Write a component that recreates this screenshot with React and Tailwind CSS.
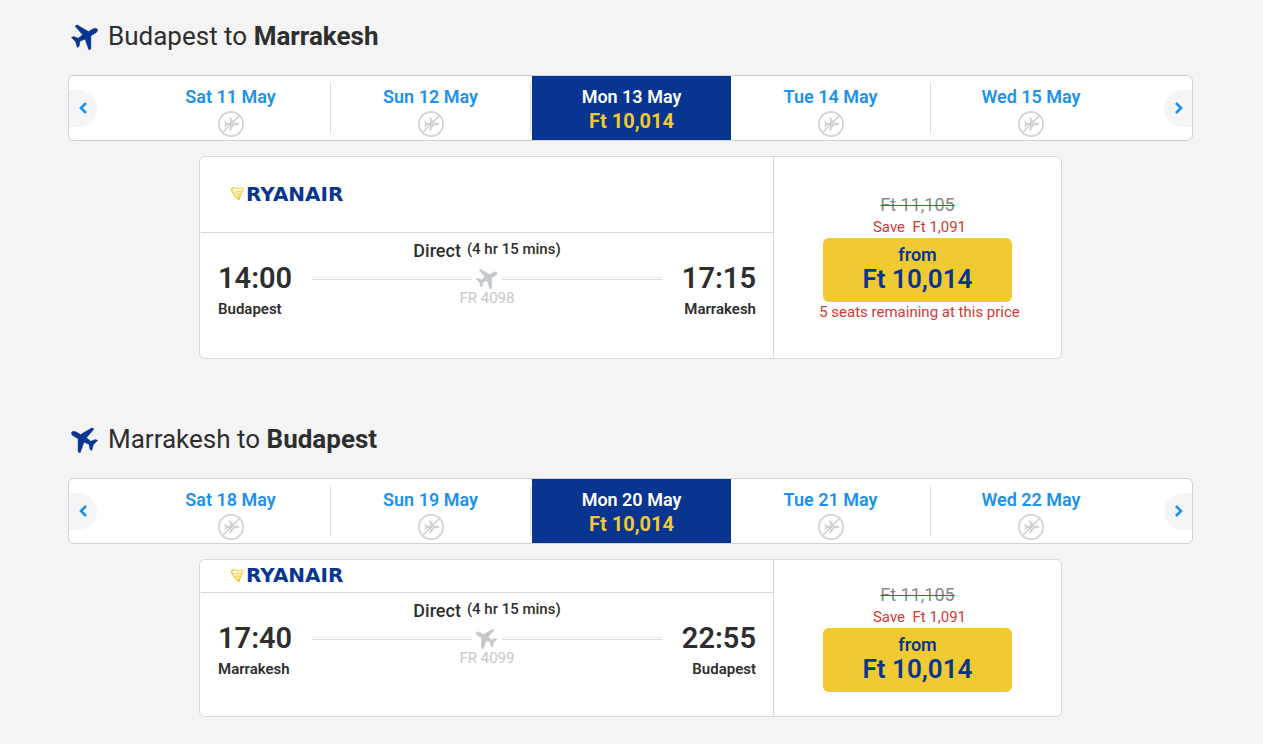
import { useState } from "react";

const flights = [
  {
    from: "Budapest",
    to: "Marrakesh",
    days: ["Sat 11 May", "Sun 12 May", "Mon 13 May", "Tue 14 May", "Wed 15 May"],
    depart: "14:00",
    arrive: "17:15",
    number: "FR 4098",
    seats: "5 seats remaining at this price",
    flip: false,
  },
  {
    from: "Marrakesh",
    to: "Budapest",
    days: ["Sat 18 May", "Sun 19 May", "Mon 20 May", "Tue 21 May", "Wed 22 May"],
    depart: "17:40",
    arrive: "22:55",
    number: "FR 4099",
    seats: null,
    flip: true,
  },
];

// points right, tail at the origin
const PLANE =
  "M26 0 C26 -1.6 24 -2.5 21.5 -2.5 L17.2 -2.4 L11 -13.2 C10.4 -14.2 9 -14 8.3 -13.6 L10.4 -2.5 L5 -1.8 L1.8 -5.6 L-0.6 -5.8 L1 0 L-0.6 5.8 L1.8 5.6 L5 1.8 L10.4 2.5 L8.3 13.6 C9 14 10.4 14.2 11 13.2 L17.2 2.4 L21.5 2.5 C24 2.5 26 1.6 26 0 Z";

function Plane({ className, flip }) {
  return (
    <svg viewBox="0 0 30 30" className={className} aria-hidden="true">
      <g transform={flip ? "translate(29 0) scale(-1 1)" : undefined}>
        <path
          d={PLANE}
          fill="currentColor"
          stroke="currentColor"
          strokeWidth="0.4"
          transform="translate(4.8 21.2) rotate(-30)"
        />
      </g>
    </svg>
  );
}

function NoFlights() {
  return (
    <svg
      viewBox="0 0 26 26"
      className="size-[26px] text-[#cfd3d7]"
      role="img"
      aria-label="No flights"
    >
      <circle cx="13" cy="13" r="12.1" fill="none" stroke="currentColor" strokeWidth="1.7" />
      <path d={PLANE} fill="currentColor" transform="translate(6.6 13) scale(.56 .5)" />
      <path d="M5.6 22 L22 5.6" stroke="#fff" strokeWidth="0.6" />
      <path d="M4.4 21.6 L21.6 4.4" stroke="currentColor" strokeWidth="1.5" />
    </svg>
  );
}

function Logo() {
  return (
    <div className="flex items-center gap-0.5">
      <svg viewBox="0 0 26 26" className="size-[13px]" aria-hidden="true">
        <g fill="none" stroke="#f1c933" strokeLinecap="round" strokeLinejoin="round">
          <path d="M5 2 C0 3 0 7 3 8 C4 14 9 20 16 25" strokeWidth="3" />
          <path d="M5 2 C11 0 12 5 17 3 C20 1.5 23 1.5 25 3 L16 25" strokeWidth="2" />
          <path d="M8 6 L16 23 M12 6 L16 23 M16 6 L16 23 M20 6 L16 23 M6 11 L21 8 M9 15 L19 14" strokeWidth="1.1" />
        </g>
      </svg>
      <span className="font-['DejaVu_Sans'] text-xl leading-5 font-bold text-[#073590]">
        RYANAIR
      </span>
    </div>
  );
}

function ArrowButton({ next, onClick }) {
  return (
    <button
      type="button"
      onClick={onClick}
      aria-label={next ? "Next dates" : "Previous dates"}
      className={
        next
          ? "flex h-[37px] w-7 items-center justify-center rounded-l-full bg-[#f3f5f7]"
          : "flex h-[37px] w-7 items-center justify-center rounded-r-full bg-[#f3f5f7]"
      }
    >
      <svg viewBox="0 0 12 12" className="size-3" aria-hidden="true">
        <path
          d={next ? "M4 1 L9 6 L4 11" : "M9 1 L4 6 L9 11"}
          fill="none"
          stroke="#2091eb"
          strokeWidth="2.6"
        />
      </svg>
    </button>
  );
}

function DateCarousel({ days }) {
  const [selected, setSelected] = useState(2);

  return (
    <div className="mt-[23px] flex h-[66px] items-center justify-between overflow-hidden rounded-md border border-[#cfd3d7] bg-white">
      <ArrowButton onClick={() => setSelected(Math.max(0, selected - 1))} />
      <div className="mr-[33px] ml-[34px] grid h-full flex-1 grid-cols-5">
        {days.map((day, i) => (
          <button key={day} type="button" onClick={() => setSelected(i)} className="flex">
            {i === selected ? (
              <span className="ml-px flex h-full flex-1 flex-col items-center bg-[#073590] pt-[9px]">
                <span className="text-lg leading-6 font-semibold text-white">{day}</span>
                <span className="text-xl leading-6 font-bold text-[#f1c933]">Ft 10,014</span>
              </span>
            ) : (
              <span className="flex flex-1 flex-col items-center pt-[9px]">
                <span className="text-lg leading-6 font-semibold text-[#2091eb]">{day}</span>
                <span className="mt-0.5">
                  <NoFlights />
                </span>
              </span>
            )}
            {i < days.length - 1 && i !== selected && (
              <span className="my-[7px] w-px self-stretch bg-[#dcdfe2]" />
            )}
          </button>
        ))}
      </div>
      <ArrowButton next onClick={() => setSelected(Math.min(days.length - 1, selected + 1))} />
    </div>
  );
}

function FlightLine({ flip }) {
  return (
    <div className="flex items-center justify-between gap-0.5">
      <span className="h-[3px] flex-1 border-t border-b border-t-[#eceeef] border-b-[#d5dade]" />
      <Plane flip={flip} className="h-6 w-[26px] text-[#c3c8cc]" />
      <span className="h-[3px] flex-1 border-t border-b border-t-[#eceeef] border-b-[#d5dade]" />
    </div>
  );
}

function FlightCard({ flight }) {
  return (
    <div
      className={
        flight.seats
          ? "mx-auto mt-[15px] flex min-h-[203px] w-full max-w-[863px] rounded-md border border-[#d5dae1] bg-white"
          : "mx-auto mt-[15px] flex w-full max-w-[863px] rounded-md border border-[#d5dae1] bg-white"
      }
    >
      <div className="flex-1">
        <div
          className={
            flight.seats
              ? "ml-px flex h-19 items-center border-b border-[#d5dae1] pb-0.5 pl-[30px]"
              : "ml-px flex h-[33px] items-center border-b border-[#d5dae1] pb-0.5 pl-[30px]"
          }
        >
          <Logo />
        </div>
        <div className="flex gap-5 pt-2 pr-[17px] pb-[37px] pl-[18px]">
          <div className="pt-[19px]">
            <p className="text-[29px] leading-9 font-semibold">{flight.depart}</p>
            <p className="mt-[3px] text-[15px] leading-5 font-semibold">{flight.from}</p>
          </div>
          <div className="flex-1">
            <p className="flex justify-center gap-1.5 leading-5 font-medium">
              <span className="text-lg leading-5">Direct</span>
              <span className="text-[15px] leading-4">(4 hr 15 mins)</span>
            </p>
            <div className="mt-[5px]">
              <FlightLine flip={flight.flip} />
            </div>
            <p className="text-center text-[15px] leading-4 text-[#c3c8cc]">{flight.number}</p>
          </div>
          <div className="pt-[19px] text-right">
            <p className="text-[29px] leading-9 font-semibold">{flight.arrive}</p>
            <p className="mt-[3px] text-[15px] leading-5 font-semibold">{flight.to}</p>
          </div>
        </div>
      </div>
      <div className="flex w-72 flex-col items-center justify-center border-l border-[#d5dae1] pt-px">
        <p className="text-lg leading-5 text-[#84898e] line-through decoration-[#c9302c] decoration-1">
          Ft 11,105
        </p>
        <p className="pt-px pl-1 text-[15px] leading-[22px] whitespace-pre text-[#cf3a35]">
          {"Save  Ft 1,091"}
        </p>
        <button
          type="button"
          className="flex h-16 w-[189px] flex-col items-center justify-center rounded-md bg-[#f1c933] pb-0.5 font-semibold text-[#073590]"
        >
          <span className="text-lg leading-5">from</span>
          <span className="text-[26px] leading-7">Ft 10,014</span>
        </button>
        {flight.seats && (
          <p className="pl-1 text-[15px] leading-5 text-[#cf3a35]">{flight.seats}</p>
        )}
      </div>
    </div>
  );
}

export default function App() {
  return (
    <main className="flex min-h-screen flex-col gap-16 bg-[#f4f4f4] pt-5 pr-[70px] pb-6 pl-17 font-[Roboto,sans-serif] text-[#2e2e2e]">
      {flights.map((flight) => (
        <section key={flight.number}>
          <h2 className="flex items-center gap-2 text-[26px] leading-8">
            <Plane flip={flight.flip} className="ml-0.5 size-[30px] text-[#073590]" />
            <span>
              {flight.from} to <strong className="font-bold">{flight.to}</strong>
            </span>
          </h2>
          <DateCarousel days={flight.days} />
          <FlightCard flight={flight} />
        </section>
      ))}
    </main>
  );
}
